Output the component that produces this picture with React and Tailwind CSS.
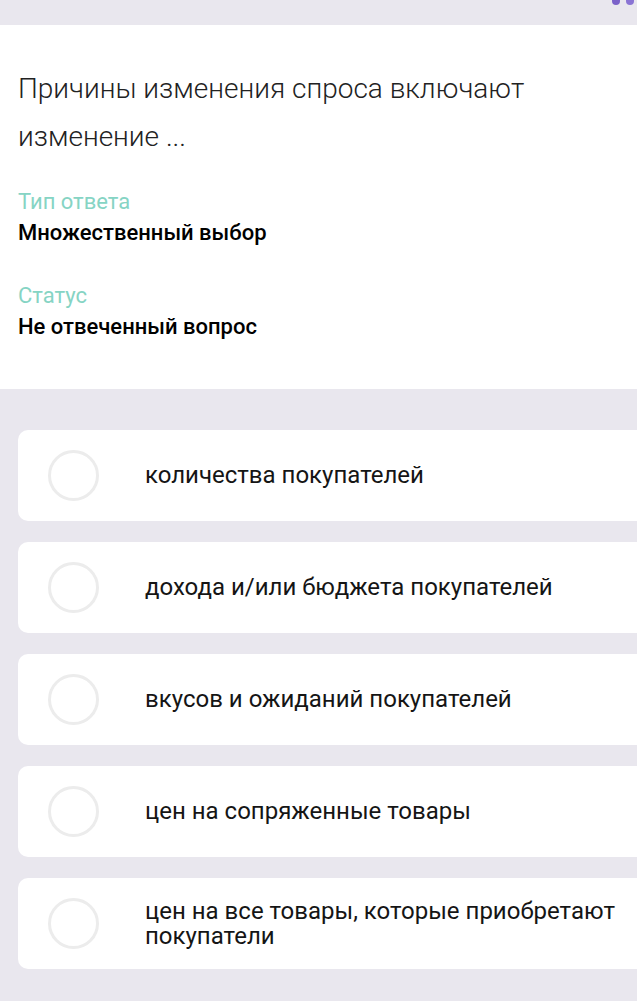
const options = [
  'количества покупателей',
  'дохода и/или бюджета покупателей',
  'вкусов и ожиданий покупателей',
  'цен на сопряженные товары',
  'цен на все товары, которые приобретают покупатели',
]

export default function App() {
  return (
    <div className="relative min-h-[1001px] w-[637px] overflow-hidden bg-[#e9e7ee] font-['Roboto',sans-serif]">
      {/* top dots */}
      <div className="absolute right-[3px] top-[-3px] flex gap-[6px]">
        <span className="h-[8px] w-[8px] rounded-full bg-[#7b62c9]" />
        <span className="h-[8px] w-[8px] rounded-full bg-[#8a74d4]" />
      </div>

      <div className="h-[25px]" />

      {/* question */}
      <div className="bg-white px-[18px] pt-[40px] pb-[47px]">
        <p className="w-[560px] text-[28px] font-light leading-[48px] text-[#222]">
          Причины изменения спроса включают изменение ...
        </p>
        <div className="mt-[25px]">
          <div className="text-[22px] leading-[31px] text-[#86d4c4]">Тип ответа</div>
          <div className="text-[22px] font-medium leading-[31px] text-black">Множественный выбор</div>
        </div>
        <div className="mt-[32px]">
          <div className="text-[22px] leading-[31px] text-[#86d4c4]">Статус</div>
          <div className="text-[22px] font-medium leading-[31px] text-black">Не отвеченный вопрос</div>
        </div>
      </div>

      {/* options */}
      <div className="flex flex-col gap-[21px] pt-[41px] pl-[18px]">
        {options.map((o) => (
          <div key={o} className="flex h-[91px] w-[640px] items-center rounded-l-[10px] bg-white">
            <div className="ml-[30px] h-[51px] w-[51px] shrink-0 rounded-full border-[3px] border-[#ececec]" />
            <div className="ml-[46px] w-[480px] text-[24px] leading-[25px] text-[#151515]">{o}</div>
          </div>
        ))}
      </div>
    </div>
  )
}
